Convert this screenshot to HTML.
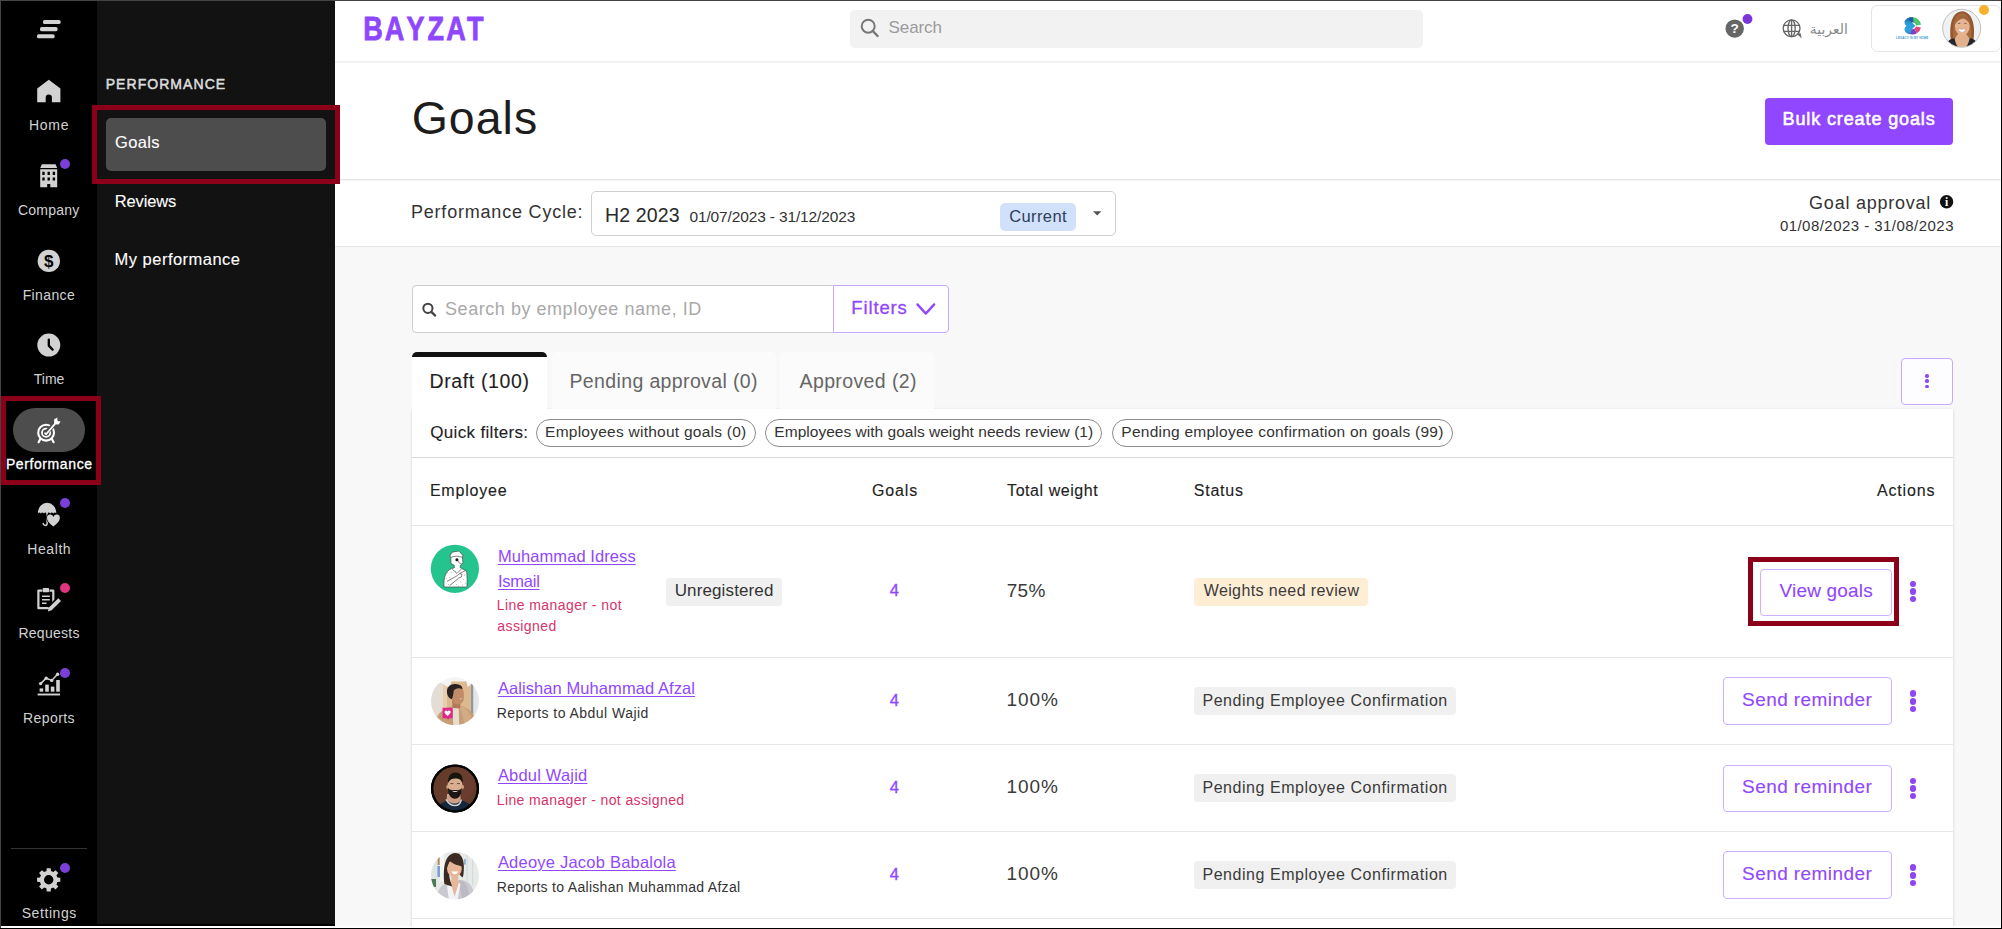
<!DOCTYPE html>
<html lang="en">
<head>
<meta charset="utf-8">
<title>Goals - Bayzat</title>
<style>
*{box-sizing:border-box;margin:0;padding:0}
html,body{width:2002px;height:929px;overflow:hidden;background:#fff}
body{font-family:"Liberation Sans",sans-serif;color:#222;position:relative}
.abs{position:absolute}
.t{position:absolute;white-space:nowrap;display:block}
.u{text-decoration:underline;text-decoration-thickness:1px;text-underline-offset:2px}
svg{position:absolute;overflow:visible}
.dot{position:absolute;width:10px;height:10px;border-radius:50%;background:#7a3fd6}
.red{position:absolute;border:5px solid #8b0018}
.hl{position:absolute;height:1px;background:#e4e4e4}
.bdg{position:absolute;border-radius:4px;background:#f0f0f0}
.btn{position:absolute;border:1px solid #cdb0ff;border-radius:4px;background:#fff}
.chip{position:absolute;border:1px solid #8c8c8c;border-radius:14px;background:#fff}
.kd{position:absolute;width:6.6px;height:6.6px;border-radius:50%;background:#8f46f0}
</style>
</head>
<body>
<div class="abs" style="left:1px;top:1px;width:96px;height:925px;background:#000;"></div>
<div class="abs" style="left:97px;top:1px;width:238px;height:923px;background:#121212;"></div>
<div class="abs" style="left:97px;top:924px;width:238px;height:2px;background:#000;"></div>
<div class="abs" style="left:12.7px;top:408px;width:72.3px;height:44px;background:#4d4d4d;border-radius:22px;"></div>
<div class="abs" style="left:11px;top:848px;width:76px;height:1px;background:#333;"></div>
<svg style="left:0;top:0" width="340" height="929" viewBox="0 0 340 929">
<g fill="#d2d2d2"><rect x="43" y="19.9" width="17.6" height="4.1" rx="1.6"/><rect x="40" y="27.1" width="17.6" height="4.1" rx="1.6"/><rect x="37" y="34.2" width="17.6" height="4.1" rx="1.6"/></g>
<path fill="#d2d2d2" d="M48.8 79.8 L60.4 88.4 V102.3 H51.9 V97.6 a3.1 3.1 0 0 0 -6.2 0 V102.3 H37.2 V88.4 Z"/>
<path fill="#d2d2d2" fill-rule="evenodd" d="M41.9 164.2 H55.5 L57.2 167.9 H40.2 Z M40.2 169.3 H57.2 V187.2 H50.3 V183.9 H47.2 V187.2 H40.2 Z M42.3 171.8 h2.4 v3.2 h-2.4 Z M42.3 177.4 h2.4 v3.2 h-2.4 Z M47.5 171.8 h2.4 v3.2 h-2.4 Z M47.5 177.4 h2.4 v3.2 h-2.4 Z M52.7 171.8 h2.4 v3.2 h-2.4 Z M52.7 177.4 h2.4 v3.2 h-2.4 Z "/>
<circle cx="48.8" cy="260.9" r="11.2" fill="#d2d2d2"/>
<text x="48.8" y="267" text-anchor="middle" font-family="Liberation Sans, sans-serif" font-weight="700" font-size="17" fill="#000">$</text>
<circle cx="48.8" cy="345.1" r="11.5" fill="#d2d2d2"/>
<path d="M48.8 339.6 V345.6 L52.6 349.6" fill="none" stroke="#000" stroke-width="2.3" stroke-linecap="round" stroke-linejoin="round"/>
<g><path d="M40.6 438.5 L38.6 442.2 M51.6 438.5 L53.6 442.2" stroke="#fff" stroke-width="2.2" stroke-linecap="round"/><circle cx="46.1" cy="432.7" r="7.9" fill="#4d4d4d" stroke="#fff" stroke-width="2.1"/><circle cx="46.1" cy="432.7" r="4.1" fill="none" stroke="#fff" stroke-width="1.8"/><path d="M46.1 432.7 L56.2 422.4" stroke="#4d4d4d" stroke-width="4.4"/><path d="M45 433.2 l1.1 1 L56.2 422.4" stroke="#fff" stroke-width="1.7" fill="none" stroke-linecap="round"/><path d="M54.3 424.3 L54.0 419.6 L57.2 417.6 L57.6 420.9 L60.6 421.4 L58.6 424.6 Z" fill="#fff"/></g>
<path fill="#d2d2d2" d="M37.9 513.4 A9.2 10.7 0 0 1 56.3 513.4 Q54.8 511.6 53.3 513.4 Q51.8 511.6 50.3 513.4 Q48.8 511.6 47.1 513.4 Q45.4 511.6 43.9 513.4 Q42.4 511.6 40.9 513.4 Q39.4 511.6 37.9 513.4 Z"/>
<path d="M47.1 512.5 V523.5 a1.9 1.9 0 0 1 -3.8 0" fill="none" stroke="#d2d2d2" stroke-width="1.5" stroke-linecap="round"/>
<path d="M53.4 526.6 C50 523.6 47.1 521.3 47.1 518.4 A3.2 3.2 0 0 1 53.4 517.1 A3.2 3.2 0 0 1 59.7 518.4 C59.7 521.3 56.8 523.6 53.4 526.6 Z" fill="#d2d2d2" stroke="#000" stroke-width="1.6" paint-order="stroke"/>
<path d="M42.2 590.6 H38.4 V608.2 H53.3 V590.6 H49.5" fill="none" stroke="#d2d2d2" stroke-width="2.2" stroke-linejoin="round"/>
<rect x="42.6" y="588" width="6.5" height="4.2" rx="1" fill="#d2d2d2"/>
<path d="M42 596.3 H49.8 M42 599.8 H49.8 M42 603.3 H46.5" stroke="#d2d2d2" stroke-width="1.5"/>
<path d="M59.6 599.6 L50.2 609.0" stroke="#000" stroke-width="7.2" stroke-linecap="butt"/>
<path d="M58.3 598.2 L61.0 600.9 L51.6 610.3 L47.9 611.4 L48.9 607.6 Z" fill="#d2d2d2"/>
<path d="M37.6 694.5 H60" stroke="#d2d2d2" stroke-width="1.9"/>
<g fill="#d2d2d2"><rect x="39.6" y="688.4" width="3.6" height="3.3"/><rect x="45.2" y="684.6" width="3.6" height="7.1"/><rect x="50.8" y="686.6" width="3.6" height="5.1"/><rect x="56.2" y="680" width="3.6" height="11.7"/></g>
<path d="M40.6 683.6 L46.2 678.2 L51.7 680.4 L57.6 674.2" fill="none" stroke="#d2d2d2" stroke-width="1.5"/>
<g fill="#d2d2d2"><circle cx="40.6" cy="683.6" r="1.7"/><circle cx="46.2" cy="678.2" r="1.7"/><circle cx="51.7" cy="680.4" r="1.7"/><circle cx="57.6" cy="674.2" r="1.7"/></g>
<path fill="#d2d2d2" fill-rule="evenodd" d="M46.47 871.08 L46.70 868.17 L50.70 868.17 L50.93 871.08 L53.29 872.06 L55.51 870.16 L58.34 872.99 L56.44 875.21 L57.42 877.57 L60.33 877.80 L60.33 881.80 L57.42 882.03 L56.44 884.39 L58.34 886.61 L55.51 889.44 L53.29 887.54 L50.93 888.52 L50.70 891.43 L46.70 891.43 L46.47 888.52 L44.11 887.54 L41.89 889.44 L39.06 886.61 L40.96 884.39 L39.98 882.03 L37.07 881.80 L37.07 877.80 L39.98 877.57 L40.96 875.21 L39.06 872.99 L41.89 870.16 L44.11 872.06 Z M44.00 879.80 a4.70 4.70 0 1 0 9.40 0 a4.70 4.70 0 1 0 -9.40 0 Z"/>
</svg>
<div class="dot" style="left:59.7px;top:159.2px;background:#7a3fd6"></div>
<div class="dot" style="left:59.7px;top:497.6px;background:#7a3fd6"></div>
<div class="dot" style="left:59.7px;top:582.6px;background:#e0347c"></div>
<div class="dot" style="left:59.7px;top:667.6px;background:#7a3fd6"></div>
<div class="dot" style="left:59.8px;top:862.5px;background:#7a3fd6"></div>
<span class="t" style="left:28.88px;top:118px;font-size:14px;line-height:14px;color:#d2d2d2;letter-spacing:0.76px;">Home</span>
<span class="t" style="left:17.9px;top:203px;font-size:14px;line-height:14px;color:#d2d2d2;letter-spacing:0.23px;">Company</span>
<span class="t" style="left:22.68px;top:288px;font-size:14px;line-height:14px;color:#d2d2d2;letter-spacing:0.37px;">Finance</span>
<span class="t" style="left:33.82px;top:372px;font-size:14px;line-height:14px;color:#d2d2d2;letter-spacing:-0.02px;">Time</span>
<span class="t" style="left:5.88px;top:457px;font-size:14px;line-height:14px;color:#fff;letter-spacing:0.6px;-webkit-text-stroke:0.32px #fff;">Performance</span>
<span class="t" style="left:27.28px;top:542px;font-size:14px;line-height:14px;color:#d2d2d2;letter-spacing:0.58px;">Health</span>
<span class="t" style="left:18.38px;top:626px;font-size:14px;line-height:14px;color:#d2d2d2;letter-spacing:0.28px;">Requests</span>
<span class="t" style="left:22.98px;top:711px;font-size:14px;line-height:14px;color:#d2d2d2;letter-spacing:0.43px;">Reports</span>
<span class="t" style="left:21.67px;top:906px;font-size:14px;line-height:14px;color:#d2d2d2;letter-spacing:0.59px;">Settings</span>
<span class="t" style="left:105.68px;top:77px;font-size:14px;line-height:14px;color:#dcdcdc;letter-spacing:1.06px;-webkit-text-stroke:0.5px #dcdcdc;">PERFORMANCE</span>
<div class="abs" style="left:106px;top:118px;width:220px;height:52.5px;background:#4d4d4d;border-radius:5px;"></div>
<span class="t" style="left:114.97px;top:134px;font-size:16.5px;line-height:17px;color:#fff;letter-spacing:0.33px;-webkit-text-stroke:0.1px #fff;">Goals</span>
<span class="t" style="left:114.78px;top:193px;font-size:16.5px;line-height:17px;color:#fff;letter-spacing:-0.16px;-webkit-text-stroke:0.1px #fff;">Reviews</span>
<span class="t" style="left:114.58px;top:251px;font-size:16.5px;line-height:17px;color:#fff;letter-spacing:0.48px;-webkit-text-stroke:0.1px #fff;">My performance</span>
<div class="abs" style="left:335px;top:1px;width:1666px;height:246px;background:#fff;"></div>
<div class="abs" style="left:335px;top:247px;width:1666px;height:679px;background:#f8f8f8;"></div>
<div class="abs" style="left:335px;top:61px;width:1666px;height:2px;background:#f2f2f2;"></div>
<div class="abs" style="left:335px;top:179px;width:1666px;height:1px;background:#e4e4e4;"></div>
<div class="abs" style="left:335px;top:180px;width:1666px;height:1px;background:#f5f5f5;"></div>
<div class="abs" style="left:335px;top:246px;width:1666px;height:1px;background:#e6e6e6;"></div>
<svg style="left:355px;top:8px" width="140" height="42" viewBox="355 8 140 42"><text transform="scale(0.8,1)" x="454.06 480.9 508.29 534.45 557.84 583.61" y="40.3" font-family="Liberation Sans, sans-serif" font-weight="700" font-size="33.8" fill="#8e47ff" stroke="#8e47ff" stroke-width="0.8">BAYZAT</text></svg>
<div class="abs" style="left:850.4px;top:9.5px;width:573px;height:38.2px;background:#f2f2f2;border-radius:5px;"></div>
<svg style="left:858px;top:16px" width="24" height="24" viewBox="858 16 24 24"><circle cx="868.2" cy="26.2" r="6.5" fill="none" stroke="#777" stroke-width="2"/><path d="M872.9 31.2 L877.6 36" stroke="#777" stroke-width="2.4" stroke-linecap="round"/></svg>
<span class="t" style="left:888.53px;top:19px;font-size:17px;line-height:17px;color:#9b9b9b;letter-spacing:-0.08px;">Search</span>
<svg style="left:1720px;top:10px" width="40" height="36" viewBox="1720 10 40 36"><circle cx="1734.7" cy="28.6" r="9.2" fill="#666"/><text x="1734.7" y="33.4" text-anchor="middle" font-family="Liberation Sans, sans-serif" font-weight="700" font-size="13.5" fill="#fff">?</text><circle cx="1747.5" cy="19" r="4.9" fill="#7b35d9"/></svg>
<svg style="left:1780px;top:16px" width="26" height="26" viewBox="1780 16 26 26"><g fill="none" stroke="#666" stroke-width="1.35"><circle cx="1791.6" cy="28.3" r="8.4"/><ellipse cx="1791.6" cy="28.3" rx="3.6" ry="8.4"/><path d="M1791.6 19.9 V36.7 M1783.6 25.3 H1799.6 M1783.6 31.3 H1799.6"/></g><path d="M1796.6 33.6 L1801.6 38.4 L1800.6 33.2 Z" fill="#666"/></svg>
<span class="t" lang="ar" dir="rtl" style="left:1809.8px;top:18.6px;font-size:13.9px;line-height:20px;color:#888;font-family:'DejaVu Sans',sans-serif">العربية</span>
<div class="abs" style="left:1871.4px;top:4.8px;width:129.2px;height:47.6px;border:1px solid #e4e4e4;border-radius:6px;background:#fff;"></div>
<svg style="left:1893px;top:14px" width="40" height="28" viewBox="1893 14 40 28"><defs><linearGradient id="cg" x1="0" y1="0" x2="0" y2="1"><stop offset="0" stop-color="#1f5fa6"/><stop offset="0.35" stop-color="#2b9bd8"/><stop offset="0.75" stop-color="#2ea3dc"/><stop offset="1" stop-color="#3b7fd0"/></linearGradient></defs>
<g fill="none" stroke-width="5.2">
<path d="M1912.6 19.9 A5.9 5.9 0 0 1 1918.45 25.1" stroke="#4fc66c"/>
<path d="M1918.4 26.9 A5.9 5.9 0 0 1 1915.6 30.9" stroke="#e2457f"/>
<path d="M1915.6 30.9 A5.9 5.9 0 0 1 1909.6 30.9" stroke="#7d40c2"/>
</g>
<path d="M1913 17.2 C1909.5 16.8 1905.6 18.4 1904.6 21.4 C1904.2 23 1905 24.6 1906.4 25.8 C1905 27 1904.2 28.6 1904.6 30.2 C1905.4 32.6 1908 34.2 1910.6 34.3 L1911.6 29.4 L1915.4 25.8 L1911.6 22.2 Z" fill="url(#cg)"/>
<path d="M1913 17.2 C1911 17 1909 17.4 1907.4 18.4 L1911.2 22.4 L1913.6 22.3 Z" fill="#1f5fa6"/>
<text x="1912.2" y="38.6" text-anchor="middle" font-family="Liberation Sans, sans-serif" font-weight="700" font-size="3.4" letter-spacing="0.1" fill="#3b9bd5" textLength="32.4" lengthAdjust="spacingAndGlyphs">LEGACY IS MY HOME</text></svg>
<svg style="left:1940px;top:6px" width="44" height="44" viewBox="1940 6 44 44"><defs><clipPath id="pc"><circle cx="1961.7" cy="28.3" r="18.6"/></clipPath><filter id="soft2" x="-10%" y="-10%" width="120%" height="120%"><feGaussianBlur stdDeviation="0.5"/></filter></defs>
<circle cx="1961.7" cy="28.3" r="19" fill="#f0f1f2" stroke="#b9b9b9" stroke-width="0.9"/>
<g clip-path="url(#pc)"><g filter="url(#soft2)">
<path d="M1950.8 40 C1949.2 28 1950.4 12.4 1962 11.2 C1973.6 12 1975.2 28 1973.4 40 Z" fill="#93592f"/>
<path d="M1953.4 40 C1952 28 1953.4 14 1962 13.2 C1970.6 14 1972.2 28 1970.8 40 Z" fill="#a86c40"/>
<path d="M1944 49 C1945 42 1950 38.8 1955 38 L1969.4 38 C1974 38.8 1979 42 1980 49 Z" fill="#23252e"/>
<path d="M1954.6 38.6 C1956 46 1958 48 1962 48 C1966 48 1968 46 1969.6 38.6 L1966 34 L1958 34 Z" fill="#e4b08c"/>
<ellipse cx="1962.3" cy="26" rx="7.4" ry="9.6" fill="#e6b491"/>
<path d="M1954.6 25 C1955 17.6 1959 15.4 1962.4 15.4 C1966.4 15.4 1970 18 1970.2 25.4 C1968.6 21.4 1966 19.4 1963 18.6 C1960 19.4 1956.6 21.2 1954.6 25 Z" fill="#a2663a"/>
<path d="M1958 28.8 Q1962.2 29.6 1966 28.8 Q1965 32.4 1962 32.4 Q1959 32.4 1958 28.8 Z" fill="#fff" stroke="#c98473" stroke-width="0.5"/>
<ellipse cx="1959.2" cy="23.4" rx="1.3" ry="0.7" fill="#8a6a55"/><ellipse cx="1965.4" cy="23.4" rx="1.3" ry="0.7" fill="#8a6a55"/>
</g></g></svg>
<div class="dot" style="left:1979px;top:4.5px;background:#fbb02d;width:10.2px;height:10.2px"></div>
<span class="t" style="left:411.68px;top:95px;font-size:46.5px;line-height:47px;color:#1d1d1d;letter-spacing:1.02px;">Goals</span>
<div class="abs" style="left:1764.5px;top:98px;width:188.5px;height:46.7px;background:#9147ff;border-radius:4px;"></div>
<span class="t" style="left:1782.56px;top:110px;font-size:18px;line-height:18px;color:#fff;letter-spacing:0.88px;-webkit-text-stroke:0.55px #fff;">Bulk create goals</span>
<span class="t" style="left:410.96px;top:203px;font-size:18px;line-height:18px;color:#333;letter-spacing:0.8px;">Performance Cycle:</span>
<div class="abs" style="left:590.5px;top:191.2px;width:525.3px;height:45px;background:#fff;border:1px solid #cfcfcf;border-radius:5px;"></div>
<span class="t" style="left:604.94px;top:205px;font-size:19.5px;line-height:20px;color:#2a2a2a;letter-spacing:0.15px;">H2 2023</span>
<span class="t" style="left:689.46px;top:209px;font-size:15.5px;line-height:16px;color:#333;letter-spacing:-0.14px;">01/07/2023 - 31/12/2023</span>
<div class="abs" style="left:1000px;top:202.8px;width:76px;height:27.9px;background:#d1e1fc;border-radius:5px;"></div>
<span class="t" style="left:1009.17px;top:208px;font-size:16.5px;line-height:17px;color:#2c3e5a;letter-spacing:0.4px;">Current</span>
<svg style="left:1090px;top:208px" width="14" height="10" viewBox="1090 208 14 10"><path d="M1093 211.2 H1101.4 L1097.2 215.4 Z" fill="#555"/></svg>
<span class="t" style="left:1809.1px;top:194px;font-size:18px;line-height:18px;color:#333;letter-spacing:0.76px;">Goal approval</span>
<svg style="left:1938px;top:193px" width="18" height="18" viewBox="1938 193 18 18"><circle cx="1946.6" cy="201.8" r="6.7" fill="#111"/><text x="1946.6" y="206" text-anchor="middle" font-family="Liberation Serif, serif" font-weight="700" font-size="11.5" fill="#fff">i</text></svg>
<span class="t" style="left:1779.88px;top:218px;font-size:15px;line-height:15px;color:#333;letter-spacing:0.46px;">01/08/2023 - 31/08/2023</span>
<div class="abs" style="left:412px;top:285px;width:422px;height:47.5px;background:#fff;border:1px solid #cfcfcf;border-radius:4px 0 0 4px;"></div>
<div class="abs" style="left:833px;top:285px;width:115.6px;height:47.5px;background:#fff;border:1px solid #c9a9ff;border-radius:0 4px 4px 0;"></div>
<svg style="left:420px;top:300px" width="18" height="18" viewBox="420 300 18 18"><circle cx="427.9" cy="308.3" r="4.6" fill="none" stroke="#444" stroke-width="2"/><path d="M431.4 311.9 L435.2 315.6" stroke="#444" stroke-width="2.2" stroke-linecap="round"/></svg>
<span class="t" style="left:445.09px;top:300px;font-size:18px;line-height:18px;color:#a9a9a9;letter-spacing:0.54px;">Search by employee name, ID</span>
<span class="t" style="left:851.22px;top:298px;font-size:18.5px;line-height:19px;color:#9147ff;letter-spacing:0.88px;-webkit-text-stroke:0.3px #9147ff;">Filters</span>
<svg style="left:914px;top:300px" width="24" height="18" viewBox="914 300 24 18"><path d="M917.4 304.4 L925.8 313.6 L934.2 304.4" fill="none" stroke="#9147ff" stroke-width="2.3" stroke-linecap="round" stroke-linejoin="round"/></svg>
<div class="abs" style="left:412px;top:409px;width:1541.2px;height:531px;background:#fff;box-shadow:0 1px 3px rgba(0,0,0,0.16);"></div>
<div class="abs" style="left:551.8px;top:352px;width:223.8px;height:57px;background:#fbfbfb;border-radius:5px 5px 0 0;"></div>
<div class="abs" style="left:780.4px;top:352px;width:153.8px;height:57px;background:#fbfbfb;border-radius:5px 5px 0 0;"></div>
<div class="abs" style="left:412px;top:352px;width:134.6px;height:57.5px;background:#fff;border-top:5px solid #111;border-radius:5px 5px 0 0;"></div>
<span class="t" style="left:429.44px;top:371px;font-size:19.5px;line-height:20px;color:#1f1f1f;letter-spacing:0.63px;-webkit-text-stroke:0.1px #1f1f1f;">Draft (100)</span>
<span class="t" style="left:569.44px;top:371px;font-size:19.5px;line-height:20px;color:#666;letter-spacing:0.37px;">Pending approval (0)</span>
<span class="t" style="left:799.5px;top:371px;font-size:19.5px;line-height:20px;color:#666;letter-spacing:0.39px;">Approved (2)</span>
<div class="abs" style="left:1901.4px;top:357.5px;width:51.6px;height:47.2px;background:#fdfcff;border:1px solid #c9a9ff;border-radius:4px;"></div>
<div class="kd" style="left:1925.4px;top:374.1px;width:3.6px;height:3.6px"></div>
<div class="kd" style="left:1925.4px;top:379.3px;width:3.6px;height:3.6px"></div>
<div class="kd" style="left:1925.4px;top:384.5px;width:3.6px;height:3.6px"></div>
<span class="t" style="left:430.24px;top:424px;font-size:17px;line-height:17px;color:#222;letter-spacing:0.33px;-webkit-text-stroke:0.1px #222;">Quick filters:</span>
<div class="chip" style="left:535.8px;top:419.4px;width:219.8px;height:27.8px"></div>
<div class="chip" style="left:765.2px;top:419.4px;width:337.2px;height:27.8px"></div>
<div class="chip" style="left:1112px;top:419.4px;width:341px;height:27.8px"></div>
<span class="t" style="left:545.06px;top:424px;font-size:15.5px;line-height:16px;color:#333;letter-spacing:0.25px;">Employees without goals (0)</span>
<span class="t" style="left:774.36px;top:424px;font-size:15.5px;line-height:16px;color:#333;letter-spacing:0.02px;">Employees with goals weight needs review (1)</span>
<span class="t" style="left:1121.36px;top:424px;font-size:15.5px;line-height:16px;color:#333;letter-spacing:0.24px;">Pending employee confirmation on goals (99)</span>
<div class="hl" style="left:412px;top:456.7px;width:1541px;background:#d9d9d9"></div>
<div class="hl" style="left:412px;top:524.6px;width:1541px;background:#e6e6e6"></div>
<div class="hl" style="left:412px;top:657.3px;width:1541px;background:#e6e6e6"></div>
<div class="hl" style="left:412px;top:744.4px;width:1541px;background:#e6e6e6"></div>
<div class="hl" style="left:412px;top:831.4px;width:1541px;background:#e6e6e6"></div>
<div class="hl" style="left:412px;top:918.1px;width:1541px;background:#e6e6e6"></div>
<span class="t" style="left:429.92px;top:483px;font-size:16px;line-height:16px;color:#222;letter-spacing:0.79px;-webkit-text-stroke:0.12px #222;">Employee</span>
<span class="t" style="left:871.9px;top:483px;font-size:16px;line-height:16px;color:#222;letter-spacing:0.9px;-webkit-text-stroke:0.12px #222;">Goals</span>
<span class="t" style="left:1007.08px;top:483px;font-size:16px;line-height:16px;color:#222;letter-spacing:0.56px;-webkit-text-stroke:0.12px #222;">Total weight</span>
<span class="t" style="left:1193.78px;top:483px;font-size:16px;line-height:16px;color:#222;letter-spacing:0.76px;-webkit-text-stroke:0.12px #222;">Status</span>
<span class="t" style="left:1877px;top:483px;font-size:16px;line-height:16px;color:#222;letter-spacing:0.83px;-webkit-text-stroke:0.12px #222;">Actions</span>
<svg style="left:0;top:0" width="2002" height="929" viewBox="0 0 2002 929">
<defs><clipPath id="av0"><circle cx="455" cy="568.8" r="24"/></clipPath><clipPath id="av1"><circle cx="455" cy="701.3" r="24"/></clipPath><clipPath id="av2"><circle cx="455" cy="788.5" r="24"/></clipPath><clipPath id="av3"><circle cx="455" cy="875.5" r="24"/></clipPath><filter id="soft" x="-10%" y="-10%" width="120%" height="120%"><feGaussianBlur stdDeviation="0.55"/></filter></defs>
<circle cx="454.9" cy="568.8" r="24.1" fill="#25c48f"/>
<g clip-path="url(#av0)" stroke="#333" stroke-width="0.6" fill="#fff" stroke-linejoin="round"><path d="M444 587 C443.4 577.5 445.6 571 451.6 568.6 L454.4 567.8 L454.2 565.2 L451 563.6 L450.8 557.4 L449.8 556 L452 552.2 L458.8 551 L462.9 555.4 L462.4 557.4 L463 563 L460.2 565.6 L460.2 567.6 L466.6 571.2 C467.4 577 467 582 467 587 Z"/><path d="M450.8 557.4 C454 555.8 459 555.8 462.4 557.4" fill="none"/><path d="M452.4 569.4 L457 573.4 L461.4 569" fill="none"/><path d="M447 581.4 L457.4 575.6 L459.6 573.6 L462 574.4 L461.4 577 L458.6 578.2 L449.6 585.6" fill="none"/><path d="M459.6 573.6 L465.4 570.6" fill="none"/><circle cx="456.9" cy="559.7" r="1.5" fill="#111" stroke="none"/><path d="M458.4 560.6 C458.6 563 460 564 461.6 563.4" fill="none"/><g fill="#777" stroke="none"><circle cx="447.2" cy="573" r="0.45"/><circle cx="449.6" cy="577.4" r="0.45"/><circle cx="446.4" cy="578.6" r="0.45"/><circle cx="451.6" cy="572.4" r="0.45"/><circle cx="453.4" cy="582.6" r="0.45"/><circle cx="456.4" cy="584.4" r="0.45"/><circle cx="460.6" cy="582" r="0.45"/><circle cx="463.6" cy="579.4" r="0.45"/><circle cx="464.6" cy="575" r="0.45"/><circle cx="462.6" cy="585" r="0.45"/><circle cx="448.4" cy="584.6" r="0.45"/><circle cx="451" cy="580" r="0.45"/><circle cx="455.6" cy="571.6" r="0.45"/><circle cx="458.6" cy="586" r="0.45"/><circle cx="465.4" cy="583.6" r="0.45"/></g></g>
<g clip-path="url(#av1)"><g filter="url(#soft)"><rect x="430" y="676" width="50" height="50" fill="#dcb98f"/><rect x="430" y="676" width="13" height="50" fill="#e4ddd5"/><rect x="443" y="676" width="4" height="50" fill="#e9cfa9"/><rect x="471" y="676" width="2.4" height="50" fill="#8f98a3"/><rect x="473.4" y="676" width="8" height="50" fill="#e3e7ea"/><path d="M436 680 L449.6 688 L451.6 681.6 L466.4 681.6 L467.6 687 L471 684.6 L470 676 L436 676 Z" fill="#f4f4f4"/><path d="M434 728 C435 715 441 710 450.4 706.4 L462 706 C470 709 475.6 714 477 728 Z" fill="#c79d74"/><path d="M462 706 C468 709 472 714 473 728 L464 728 C464 720 463 713 459.6 708.6 Z" fill="#d3ab84"/><path d="M452.6 707 L458.6 707.4 L459.4 728 L453.4 728 Z" fill="#e6ddd0"/><path d="M452 700 L460.6 702 L460 708.4 L452.6 708 Z" fill="#b07a5a"/><path d="M451 690 C452 686.6 460 685.6 462.6 689 C464.4 692 464.2 697 463.4 700.6 C462.4 704 458 705.2 454.6 703.4 C451.6 701.6 450.4 695 451 690 Z" fill="#c28c69"/><path d="M458.6 698.2 Q461 699.6 463 698 Q461 700.6 458.6 698.2 Z" fill="#fff"/><path d="M447.2 694 C445.8 687.4 450 683.6 455.6 684 C460 684.2 462.6 686.2 462.4 689.2 C459 687.4 455 688.4 453.6 691 C453.6 694 453 697.4 451.6 699.2 C449.4 698.4 447.8 696.6 447.2 694 Z" fill="#2b2321"/><path d="M442.5 707.7 H452.7 V718.2 H449.4 L448 719.8 L446.8 718.2 H442.5 Z" fill="#dd2a8a"/><path d="M447.6 716 C444.6 713.6 444 712.2 444.9 711 C445.8 710 447.1 710.4 447.6 711.5 C448.1 710.4 449.4 710 450.3 711 C451.2 712.2 450.6 713.6 447.6 716 Z" fill="#fff"/></g></g>
<circle cx="455" cy="788.5" r="24" fill="#050505"/><g clip-path="url(#av2)"><g filter="url(#soft)"><circle cx="455" cy="788.5" r="22" fill="#653a2b"/><ellipse cx="462" cy="784" rx="12" ry="16" fill="#6e4030" opacity="0.7"/><path d="M436 814 C437 805 442 802.6 447.4 800.6 L462 800.6 C468 802.6 473 805 474 814 Z" fill="#13263a"/><path d="M447 794 L460.4 794 L460.6 800.4 C458 804.4 452 804.6 446.6 800.4 Z" fill="#cfa085"/><path d="M446 799.4 C449 804.6 452 805.6 455 805.6 C458 805.6 460.4 803.6 461.4 799.6" fill="none" stroke="#d4d4d8" stroke-width="1.5"/><ellipse cx="455" cy="786.4" rx="7.6" ry="9.4" fill="#d9ad90"/><ellipse cx="447.4" cy="787" rx="1.2" ry="2" fill="#cf9f83"/><ellipse cx="462.8" cy="787" rx="1.2" ry="2" fill="#cf9f83"/><path d="M448.2 783 C447.6 776.4 450.6 772.6 455.6 772.4 C460.6 772.4 463.4 776 462.6 783 C461.6 779.4 459 778.4 455.4 778.4 C451.8 778.4 449.4 779.6 448.2 783 Z" fill="#17120f"/><path d="M447.8 787.6 C448 795.4 451 798.8 455 798.8 C459 798.8 461.6 795.4 462 787.6 C460.8 790.6 458.6 790 455 790 C451.4 790 449.4 790.6 447.8 787.6 Z" fill="#1f1815"/><path d="M451.6 790.6 Q455 793.6 458.6 790.6 Q455 791.6 451.6 790.6 Z" fill="#e9dcd6"/><path d="M450.4 783.6 h3 M457 783.6 h3" stroke="#5a4033" stroke-width="0.9"/></g></g><circle cx="455" cy="788.5" r="22.9" fill="none" stroke="#050505" stroke-width="2.4"/>
<g clip-path="url(#av3)"><g filter="url(#soft)"><rect x="429" y="850" width="52" height="52" fill="#e6ebea"/><rect x="429" y="850" width="8" height="52" fill="#dfe3e1"/><rect x="437.6" y="857" width="2" height="8" fill="#b08a5a"/><rect x="437.4" y="866" width="2.6" height="11" fill="#7a9fd0"/><rect x="440" y="855" width="4" height="26" fill="#f4f6f6"/><path d="M431 879 h5 v8 h-5 Z" fill="#4f7a55"/><rect x="464" y="859" width="1.8" height="5.6" fill="#8fb0d6"/><rect x="466.4" y="855" width="1.2" height="30" fill="#d4dbd9"/><rect x="472" y="855" width="1.2" height="30" fill="#d4dbd9"/><path d="M458 853.4 h2 v3 h-2 Z" fill="#b08a5a"/><path d="M436 903 C436.6 890 440 885.6 448.6 882.6 L460 880 C468 880.6 474 884 475.6 903 Z" fill="#cac8d0"/><path d="M460 880 C466 882 470 888 469 903 L462 903 C462 894 460 888 457.6 884 Z" fill="#bdbac4"/><path d="M447 886.6 L451.6 883 L454.4 896 L458.4 881.6 L460.4 884.6 L457 903 L449.4 903 Z" fill="#f3f3f5"/><path d="M451.6 876 L458 876 L458.8 883 L454.6 896.6 L451 884 Z" fill="#e6b798"/><path d="M444.4 884 C443 870 444 854.6 454.6 853 C461.6 852.8 464.6 860 463.8 870 C463.6 874 463.4 876.6 462.4 877.6 L459 874 L449 874 C449.6 880 451.4 883.6 452 886.4 Z" fill="#3a2a23"/><ellipse cx="454.4" cy="868.4" rx="7.4" ry="8.6" fill="#e6b697"/><path d="M446.6 868 C446.6 859.6 452 856.6 456.6 857.4 C460.6 858 462.8 861.6 462.8 866.4 C459 866 453 864.4 449.6 860.8 C448.6 863.6 447.8 866.4 446.6 868 Z" fill="#3d2c24"/><path d="M451.6 871 Q454.8 872.2 458 871 Q457.2 874.2 454.8 874.2 Q452.4 874.2 451.6 871 Z" fill="#fff"/></g></g>
</svg>
<span class="t u" style="left:497.9px;top:548px;font-size:16.5px;line-height:17px;color:#9147ff;letter-spacing:0.08px;">Muhammad Idress</span>
<span class="t u" style="left:497.9px;top:573px;font-size:16.5px;line-height:17px;color:#9147ff;letter-spacing:-0.23px;">Ismail</span>
<span class="t" style="left:496.78px;top:598px;font-size:14px;line-height:14px;color:#d6336c;letter-spacing:0.43px;">Line manager - not</span>
<span class="t" style="left:497.34px;top:619px;font-size:14px;line-height:14px;color:#d6336c;letter-spacing:0.41px;">assigned</span>
<div class="bdg" style="left:665.7px;top:578.3px;width:116.7px;height:28px"></div>
<span class="t" style="left:674.73px;top:582px;font-size:17px;line-height:17px;color:#333;letter-spacing:0.12px;">Unregistered</span>
<span class="t" style="left:889.87px;top:582px;font-size:16.5px;line-height:17px;color:#9147ff;-webkit-text-stroke:0.35px #9147ff;">4</span>
<span class="t" style="left:1006.65px;top:581px;font-size:19px;line-height:19px;color:#3a3a3a;letter-spacing:0.31px;">75%</span>
<div class="bdg" style="left:1193.6px;top:578.2px;width:174.6px;height:28.2px;background:#ffeed6"></div>
<span class="t" style="left:1203.7px;top:583px;font-size:16px;line-height:16px;color:#3a3a3a;letter-spacing:0.39px;">Weights need review</span>
<div class="btn" style="left:1759.7px;top:568.5px;width:132.1px;height:47.5px"></div>
<span class="t" style="left:1779.5px;top:581px;font-size:19px;line-height:19px;color:#9147ff;letter-spacing:0.18px;-webkit-text-stroke:0.12px #9147ff;">View goals</span>
<div class="kd" style="left:1909.5px;top:580.7px"></div>
<div class="kd" style="left:1909.5px;top:588.3px"></div>
<div class="kd" style="left:1909.5px;top:595.9px"></div>
<span class="t u" style="left:497.9px;top:680px;font-size:16.5px;line-height:17px;color:#9147ff;letter-spacing:0.08px;">Aalishan Muhammad Afzal</span>
<span class="t" style="left:496.78px;top:706px;font-size:14px;line-height:14px;color:#333;letter-spacing:0.46px;">Reports to Abdul Wajid</span>
<span class="t" style="left:889.87px;top:692px;font-size:16.5px;line-height:17px;color:#9147ff;-webkit-text-stroke:0.35px #9147ff;">4</span>
<span class="t" style="left:1006.38px;top:690px;font-size:19px;line-height:19px;color:#3a3a3a;letter-spacing:0.98px;">100%</span>
<div class="bdg" style="left:1193.6px;top:687.1px;width:262.9px;height:28.3px"></div>
<span class="t" style="left:1202.42px;top:693px;font-size:16px;line-height:16px;color:#3a3a3a;letter-spacing:0.55px;">Pending Employee Confirmation</span>
<div class="btn" style="left:1722.7px;top:677.4px;width:169.1px;height:47.6px"></div>
<span class="t" style="left:1742.05px;top:690px;font-size:19px;line-height:19px;color:#9147ff;letter-spacing:0.43px;-webkit-text-stroke:0.12px #9147ff;">Send reminder</span>
<div class="kd" style="left:1909.5px;top:690.4px"></div>
<div class="kd" style="left:1909.5px;top:698px"></div>
<div class="kd" style="left:1909.5px;top:705.6px"></div>
<span class="t u" style="left:497.9px;top:767px;font-size:16.5px;line-height:17px;color:#9147ff;letter-spacing:0.19px;">Abdul Wajid</span>
<span class="t" style="left:496.78px;top:793px;font-size:14px;line-height:14px;color:#d6336c;letter-spacing:0.38px;">Line manager - not assigned</span>
<span class="t" style="left:889.87px;top:779px;font-size:16.5px;line-height:17px;color:#9147ff;-webkit-text-stroke:0.35px #9147ff;">4</span>
<span class="t" style="left:1006.38px;top:777px;font-size:19px;line-height:19px;color:#3a3a3a;letter-spacing:0.98px;">100%</span>
<div class="bdg" style="left:1193.6px;top:774.2px;width:262.9px;height:28.3px"></div>
<span class="t" style="left:1202.42px;top:780px;font-size:16px;line-height:16px;color:#3a3a3a;letter-spacing:0.55px;">Pending Employee Confirmation</span>
<div class="btn" style="left:1722.7px;top:764.5px;width:169.1px;height:47.6px"></div>
<span class="t" style="left:1742.05px;top:777px;font-size:19px;line-height:19px;color:#9147ff;letter-spacing:0.43px;-webkit-text-stroke:0.12px #9147ff;">Send reminder</span>
<div class="kd" style="left:1909.5px;top:777.5px"></div>
<div class="kd" style="left:1909.5px;top:785.1px"></div>
<div class="kd" style="left:1909.5px;top:792.7px"></div>
<span class="t u" style="left:497.9px;top:854px;font-size:16.5px;line-height:17px;color:#9147ff;letter-spacing:0.22px;">Adeoye Jacob Babalola</span>
<span class="t" style="left:496.78px;top:880px;font-size:14px;line-height:14px;color:#333;letter-spacing:0.3px;">Reports to Aalishan Muhammad Afzal</span>
<span class="t" style="left:889.87px;top:866px;font-size:16.5px;line-height:17px;color:#9147ff;-webkit-text-stroke:0.35px #9147ff;">4</span>
<span class="t" style="left:1006.38px;top:864px;font-size:19px;line-height:19px;color:#3a3a3a;letter-spacing:0.98px;">100%</span>
<div class="bdg" style="left:1193.6px;top:861.1px;width:262.9px;height:28.3px"></div>
<span class="t" style="left:1202.42px;top:867px;font-size:16px;line-height:16px;color:#3a3a3a;letter-spacing:0.55px;">Pending Employee Confirmation</span>
<div class="btn" style="left:1722.7px;top:851.4px;width:169.1px;height:47.6px"></div>
<span class="t" style="left:1742.05px;top:864px;font-size:19px;line-height:19px;color:#9147ff;letter-spacing:0.43px;-webkit-text-stroke:0.12px #9147ff;">Send reminder</span>
<div class="kd" style="left:1909.5px;top:864.4px"></div>
<div class="kd" style="left:1909.5px;top:872px"></div>
<div class="kd" style="left:1909.5px;top:879.6px"></div>
<div class="red" style="left:92.4px;top:105.2px;width:247.2px;height:78.8px;border-width:5.2px"></div>
<div class="red" style="left:1px;top:396.2px;width:100.1px;height:88.8px;border-width:5.3px"></div>
<div class="red" style="left:1748px;top:556.7px;width:151px;height:69px;border-width:5.1px"></div>
<div class="abs" style="left:0;top:926px;width:2002px;height:2px;background:#fff"></div>
<div class="abs" style="left:0;top:0;width:2002px;height:1px;background:#444"></div>
<div class="abs" style="left:0;top:0;width:1px;height:929px;background:#444"></div>
<div class="abs" style="left:2001px;top:0;width:1px;height:929px;background:#000"></div>
<div class="abs" style="left:0;top:928px;width:2002px;height:1px;background:#000"></div>
</body>
</html>
